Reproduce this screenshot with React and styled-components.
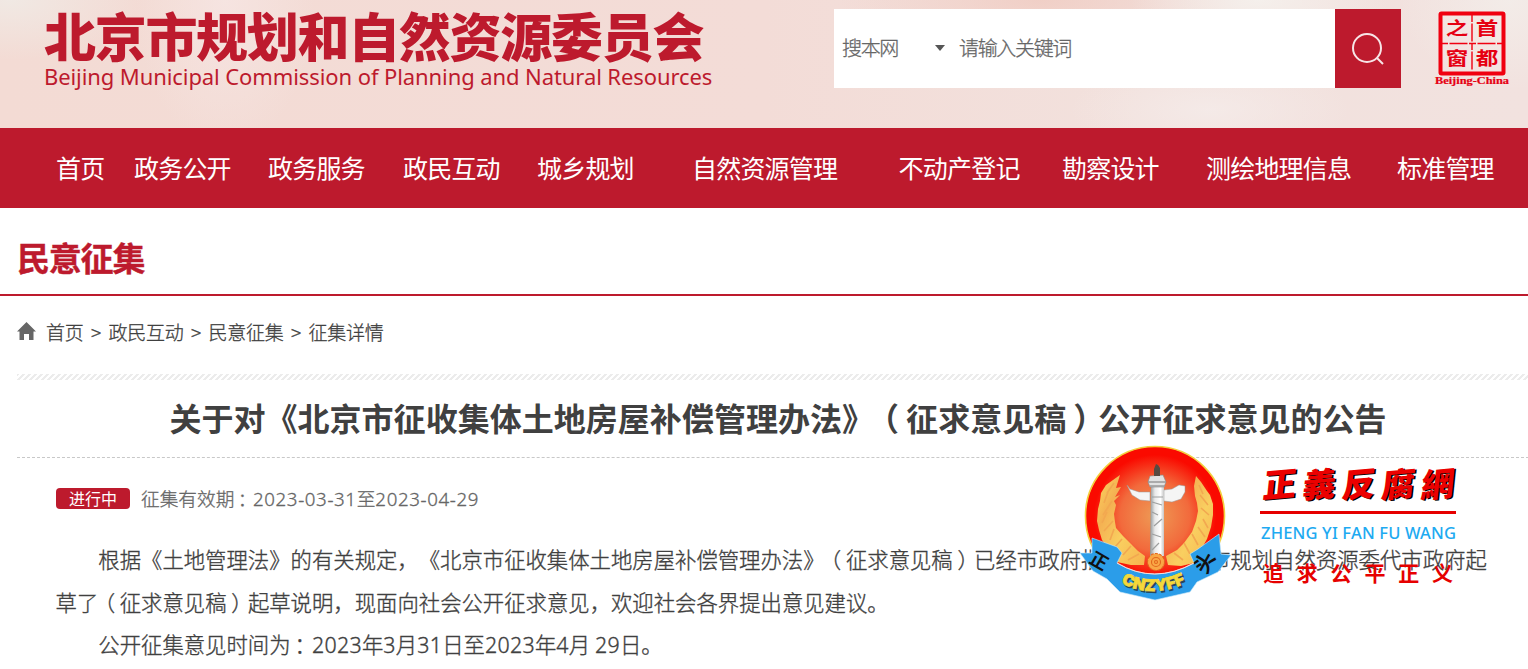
import React from 'react';
import styled, { createGlobalStyle } from 'styled-components';

const RED = '#bd1a2d';

const GlobalStyle = createGlobalStyle`
    * { box-sizing: border-box; }
    body {
        margin: 0;
        background: #fff;
        color: #404040;
        font-family: "Noto Sans CJK SC", sans-serif;
        text-spacing-trim: space-all;
        overflow: hidden;
    }
`;

const Page = styled.div`
    position: relative;
    width: 1528px;
    height: 669px;
    overflow: hidden;
`;

const Header = styled.header`
    display: flex;
    height: 128px;
    background:
        radial-gradient(ellipse 130px 60px at 10px 0, rgba(240, 234, 229, .9), transparent),
        radial-gradient(ellipse 90px 150px at 225px 0, rgba(247, 232, 230, .7), transparent),
        radial-gradient(ellipse 110px 90px at 1510px 0, rgba(243, 240, 236, .7), transparent),
        radial-gradient(ellipse 130px 60px at 1260px 0, rgba(245, 241, 237, .9), transparent),
        radial-gradient(ellipse 200px 60px at 1040px 0, rgba(240, 203, 193, .8), transparent),
        radial-gradient(ellipse 140px 50px at 1210px 110px, rgba(245, 236, 234, .8), transparent),
        linear-gradient(90deg, #f3dbd4, #f3dcd7 50%, #f2e1dd 75%, #f2e2df);
`;

const Brand = styled.div`
    width: 834px;
    padding-left: 44px;
    color: ${RED};
    white-space: nowrap;
`;

const BrandName = styled.div`
    height: 63px;
    line-height: 69px;
    font-size: 52px;
    font-weight: 900;
    letter-spacing: -1.3px;
`;

const BrandEnglish = styled.div`
    font: 400 22px/26px "Noto Sans", sans-serif;
    letter-spacing: -.09px;
`;

const Search = styled.div`
    display: flex;
    align-items: center;
    width: 567px;
    height: 79px;
    margin-top: 9px;
    padding-left: 8px;
    background: #fff;
    color: #666;
    font-size: 20px;
    font-weight: 300;
    letter-spacing: -1.33px;
    -webkit-text-stroke: .3px;
`;

const Scope = styled.span`
    width: 93px;
    margin-top: -2px;
`;

const Placeholder = styled.span`
    margin-top: -2px;
`;

const Caret = styled.i`
    border: 5px solid transparent;
    border-top: 6px solid #555;
    border-bottom: 0;
    margin: -1px 14px 0 0;
`;

const SearchButton = styled.button`
    display: flex;
    align-items: center;
    justify-content: center;
    width: 66px;
    height: 79px;
    margin-left: auto;
    padding: 0;
    border: 0;
    background: ${RED};
`;

const Seal = styled.svg`
    width: 84px;
    height: 90px;
    margin: 5px 0 0 29px;
`;

const Nav = styled.nav`
    display: grid;
    grid-template-columns: 78px 134px 135px 134px 155px 206.6px 163.4px 144px 191px 131px;
    height: 80px;
    padding-left: 56px;
    background: ${RED};
`;

const NavItem = styled.a`
    color: #fff;
    font-size: 25px;
    line-height: 78px;
    letter-spacing: -.8px;
    white-space: nowrap;
`;

const Section = styled.h2`
    height: 88px;
    margin: 0;
    padding: 7px 0 0 17px;
    border-bottom: 2px solid ${RED};
    color: ${RED};
    font-size: 33px;
    font-weight: 700;
    line-height: 84px;
    letter-spacing: -1.2px;
    -webkit-text-stroke: .4px;
`;

const Crumbs = styled.div`
    display: flex;
    align-items: center;
    height: 70px;
    padding-left: 17px;
    font-size: 19px;
    font-weight: 300;
    letter-spacing: -.2px;
    -webkit-text-stroke: .3px;
`;

const HomeIcon = styled.svg`
    width: 19px;
    height: 19px;
    margin: 1px 10px 0 0;
`;

const Separator = styled.span`
    width: 24.8px;
    text-align: center;
`;

const Content = styled.main`
    width: 1522px;
    margin: 8px 0 0 17px;
`;

const Stripes = styled.div`
    height: 6px;
    background: linear-gradient(135deg, #ececec 25%, #fff 25% 50%, #ececec 50% 75%, #fff 75%) 0 0 / 6px 6px;
`;

const Title = styled.h1`
    height: 78px;
    margin: 0;
    border-bottom: 1px dashed #c8c8c8;
    font-size: 32px;
    font-weight: 700;
    line-height: 75px;
    letter-spacing: .03px;
    text-align: center;
    white-space: nowrap;
`;

const Meta = styled.div`
    display: flex;
    align-items: center;
    height: 81px;
    padding-left: 39px;
    color: #666;
    font-size: 18.67px;
    font-weight: 300;
`;

const Period = styled.span`
    margin-top: -2px;
    -webkit-text-stroke: .3px;
`;

const Badge = styled.span`
    width: 74px;
    height: 21px;
    margin-right: 11px;
    border-radius: 4px;
    background: ${RED};
    color: #fff;
    font-size: 16px;
    font-weight: 400;
    line-height: 20px;
    text-align: center;
`;

const Digits = styled.span`
    font-family: "Noto Sans", sans-serif;
    letter-spacing: ${(p) => p.$gap || '.3px'};
`;

// full-width mark drawn nearer to the middle of its cell
const Mark = styled.span`
    display: inline-block;
    text-indent: 0;
    transform: translateX(${(p) => p.$shift}em);
`;

const Paragraph = styled.p`
    margin: 0;
    padding-left: 38.6px;
    font-size: 21.36px;
    line-height: 42.67px;
    text-indent: 2em;
    white-space: nowrap;
    font-weight: 300;
    -webkit-text-stroke: .35px;
`;

const Article = styled.div`
    margin-top: -1px;
`;

const Watermark = styled.svg`
    position: absolute;
    left: 1070px;
    top: 435px;
    width: 400px;
    height: 180px;
`;

const navItems = [
    '首页', '政务公开', '政务服务', '政民互动', '城乡规划',
    '自然资源管理', '不动产登记', '勘察设计', '测绘地理信息', '标准管理',
];

const crumbs = ['首页', '政民互动', '民意征集', '征集详情'];

const shifts = { '（': -.22, '）': .22, '：': .18 };

const Marked = ({ children }) => children.split(/([（）：])/).map((part, i) => (
    shifts[part] ? <Mark key={i} $shift={shifts[part]}>{part}</Mark> : part
));

const SealLogo = () => (
    <Seal viewBox="0 0 84 90" fill="#e60012">
        <rect x="10.5" y="8.5" width="63" height="60" rx="1" fill="none" stroke="#f00010" strokeWidth="4" />
        <path d="M42 10V66M11 38.5H72" fill="none" stroke="#f00010" strokeWidth="1.4" strokeDasharray="7 1.5 18 1.5" />
        <g fontFamily="'Noto Sans CJK SC', sans-serif" fontWeight="700" textAnchor="middle">
            <text transform="translate(27 30) scale(1.25 1)" fontSize="18">之</text>
            <text transform="translate(57 30) scale(1.25 1)" fontSize="18">首</text>
            <text transform="translate(27 60) scale(1.25 1)" fontSize="18">窗</text>
            <text transform="translate(57 60) scale(1.25 1)" fontSize="18">都</text>
        </g>
        <text x="5" y="79" fontFamily="'Liberation Serif', serif" fontWeight="700" fontSize="9.5" textLength="74" lengthAdjust="spacingAndGlyphs" stroke="#e60012" strokeWidth=".2">Beijing-China</text>
    </Seal>
);

const WatermarkLogo = () => (
    <Watermark viewBox="0 0 400 180">
        <defs>
            <radialGradient id="disc" cx="50%" cy="50%">
                <stop offset="0" stopColor="#ee9a55" />
                <stop offset=".5" stopColor="#f26a3c" />
                <stop offset=".88" stopColor="#fa0a00" />
            </radialGradient>
            <linearGradient id="stone">
                <stop offset="0" stopColor="#8f9496" />
                <stop offset=".35" stopColor="#e9e9e9" />
                <stop offset=".75" stopColor="#fff" />
                <stop offset="1" stopColor="#c5c5c5" />
            </linearGradient>
            <linearGradient id="wheat" x1="0" x2="1" y1="0" y2="1">
                <stop offset="0" stopColor="#fbd760" />
                <stop offset=".3" stopColor="#f4b052" />
                <stop offset=".6" stopColor="#f9cf60" />
                <stop offset="1" stopColor="#f6b34e" />
            </linearGradient>
        </defs>
        <circle cx="85" cy="81" r="69.5" fill="url(#disc)" stroke="#f3cf3d" strokeWidth="1.6" />
        <path d="M50 40 43 45 36 50 31 58 30 66 28 74 27 86 29 95 32 105 38 113 48 121 47 127 61 130 74 130 75 121 68 116 61 109 53 101 46 93 45 87 44 79 46 70 44 66 50 60 45 62 51 52 46 53Z" fill="url(#wheat)" />
        <path d="M126 41 131 47 135 53 137 56 140 60 143 69 143 80 141 92 137 104 132 113 123 121 124 128 111 131 98 130 96 121 107 115 114 108 122 97 126 86 128 76 127 68 125 61 124 51Z" fill="url(#wheat)" />
        <path d="M44 48 37 58M38 57 34 68M42 66 33 80M37 77 32 88M43 86 34 96M44 94 40 105M52 104 45 112M61 111 53 120M69 119 58 125M129 50 133 59M130 60 138 70M131 73 139 80M133 84 138 93M128 92 135 102M122 99 128 110M114 108 120 119M104 118 113 125" stroke="#f2a850" strokeWidth="1.6" />
        <path d="M22 103 47 112 52 118 47 128Q84 150 124 128L120 119 128 114 149 99 151 119 161 120 148 137 127 147 120 157 85 165 50 157 37 144 23 136 10 118 22 118Z" fill="#2b9de9" stroke="#cde9f9" strokeWidth=".6" />
        <path d="M47 128Q84 150 124 128" fill="none" stroke="#f7ddd8" strokeWidth="1" />
        <path d="M57 50 60 54 69 57H80V66L70 65 62 60Z" fill="#f5f5f5" stroke="#999" strokeWidth=".5" />
        <path d="M94 55 102 54 109 50 115 51 115 57 111 64 102 67 94 66Z" fill="#f5f5f5" stroke="#999" strokeWidth=".5" />
        <path d="M81 51H94V121H80Z" fill="url(#stone)" />
        <path d="M78 47 80 41 93 40 96 47 94 52H80Z" fill="#e1e2e2" stroke="#888" strokeWidth=".6" />
        <path d="M78 47H96M80 51H95" stroke="#999" strokeWidth="1.5" />
        <path d="M84 41 84 34 86 29 88 30 90 33V41Z" fill="#574b42" />
        <path d="M82 62H93M82 67 92 70M82 77 88 80M84 91 92 84M82 99 91 102M82 115 89 108" stroke="#9d9f9f" strokeWidth="1.2" />
        <g fill="#f9a746" stroke="#e2661e" strokeWidth="1.1">
            <circle cx="86" cy="127" r="8.5" strokeDasharray="3 1.3" />
            <circle cx="86" cy="127" r="4.5" />
            <circle cx="86" cy="127" r="1.5" />
        </g>
        <g fontFamily="'Noto Sans CJK SC', sans-serif" fontWeight="700" fill="#111">
            <text transform="translate(18 127) rotate(30)" fontSize="18">正</text>
            <text transform="matrix(.5 -.9 .9 .5 136 140)" fontSize="20">头</text>
        </g>
        <path id="ribbon" d="M51 148Q84 165 120 146" fill="none" />
        <g fontFamily="Inter, sans-serif" fontWeight="900" fontSize="16">
            <text fill="#25465c" stroke="#25465c" transform="translate(1.5 1.6)"><textPath href="#ribbon" textLength="67">CNZYFF</textPath></text>
            <text fill="#f5d83a" stroke="#f5d83a" strokeWidth=".7"><textPath href="#ribbon" textLength="67">CNZYFF</textPath></text>
        </g>
        <g fontFamily="'Noto Sans CJK TC', sans-serif" fontWeight="900" fontSize="33">
            {['正', '義', '反', '腐', '網'].map((c, i) => (
                <g key={c} transform={`translate(${192 + i * 39.5} 63) skewY(-5) skewX(-6)`}>
                    <text x="1.8" y="1" fill="#000">{c}</text>
                    <text fill="#eb0000">{c}</text>
                </g>
            ))}
        </g>
        <path d="M190 77.5H386" stroke="#e60000" strokeWidth="3" />
        <text x="191" y="104" fontFamily="'Noto Sans', sans-serif" fontWeight="500" fontSize="16.5" fill="#1eaaf1" textLength="195">ZHENG YI FAN FU WANG</text>
        <text x="193" y="146" fontFamily="'Noto Sans CJK SC', sans-serif" fontWeight="700" fontSize="21" letterSpacing="12.8" fill="#e60000">追求公平正义</text>
    </Watermark>
);

const App = () => {
  return (
      <>
        <GlobalStyle />
        <Page>
            <Header>
                <Brand>
                    <BrandName>北京市规划和自然资源委员会</BrandName>
                    <BrandEnglish>Beijing Municipal Commission of Planning and Natural Resources</BrandEnglish>
                </Brand>
                <Search>
                    <Scope>搜本网</Scope>
                    <Caret />
                    <Placeholder>请输入关键词</Placeholder>
                    <SearchButton>
                        <svg width="34" height="34" viewBox="0 0 34 34" fill="none" stroke="#f7e5e7" strokeWidth="2">
                            <circle cx="16" cy="16" r="14" />
                            <path d="M26 26 32 32" />
                        </svg>
                    </SearchButton>
                </Search>
                <SealLogo />
            </Header>
            <Nav>
                {navItems.map((item) => <NavItem key={item}>{item}</NavItem>)}
            </Nav>
            <Section>民意征集</Section>
            <Crumbs>
                <HomeIcon viewBox="0 0 19 19" fill="#666">
                    <path d="M9.5 0 19 9.5H16.5V18H12V12H7V18H2.5V9.5H0Z" />
                </HomeIcon>
                {crumbs.map((item, i) => (
                    <React.Fragment key={item}>
                        {i > 0 && <Separator>&gt;</Separator>}
                        <span>{item}</span>
                    </React.Fragment>
                ))}
            </Crumbs>
            <Content>
                <Stripes />
                <Title><Marked>关于对《北京市征收集体土地房屋补偿管理办法》（征求意见稿）公开征求意见的公告</Marked></Title>
                <Meta>
                    <Badge>进行中</Badge>
                    <Period>
                        <Marked>征集有效期：</Marked><Digits $gap=".65px">2023-03-31</Digits>至<Digits $gap=".65px">2023-04-29</Digits>
                    </Period>
                </Meta>
                <Article>
                    <Paragraph>
                        <Marked>根据《土地管理法》的有关规定，《北京市征收集体土地房屋补偿管理办法》（征求意见稿）已经市政府批准立项，由市规划自然资源委代市政府起</Marked><br />
                        <Marked>草了（征求意见稿）起草说明，现面向社会公开征求意见，欢迎社会各界提出意见建议。</Marked>
                    </Paragraph>
                    <Paragraph>
                        <Marked>公开征集意见时间为：</Marked><Digits>2023</Digits>年<Digits>3</Digits>月<Digits>31</Digits>日至<Digits>2023</Digits>年<Digits>4</Digits>月 <Digits>29</Digits>日。
                    </Paragraph>
                </Article>
            </Content>
            <WatermarkLogo />
        </Page>
      </>
  );
};

export default App;
